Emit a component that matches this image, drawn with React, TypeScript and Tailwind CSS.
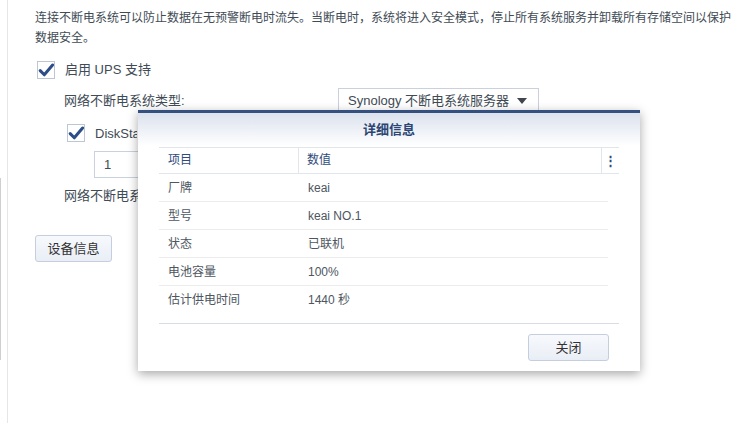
const rows = [
  { k: '厂牌', v: 'keai' },
  { k: '型号', v: 'keai NO.1' },
  { k: '状态', v: '已联机' },
  { k: '电池容量', v: '100%' },
  { k: '估计供电时间', v: '1440 秒' },
]

function CheckBox() {
  return (
    <span className="flex h-[18px] w-[18px] shrink-0 items-center justify-center border border-[#bcc6d4] bg-white">
      <svg width="16" height="16" viewBox="0 0 16 16" fill="none">
        <path d="M2.2 8.6 L6.3 12.8 L14.6 3" stroke="#2d4d88" strokeWidth="3" strokeLinecap="round" strokeLinejoin="round" />
      </svg>
    </span>
  )
}

export default function App() {
  return (
    <div className="relative h-[423px] w-[741px] overflow-hidden bg-white text-[12px] text-[#414b55] font-['Liberation_Sans','Noto_Sans_CJK_SC',sans-serif]">
      {/* sidebar edge */}
      <div className="absolute left-0 top-[178px] h-[182px] w-px bg-[#cfcfcf]" />

      <div className="ml-[7px] h-full border-l border-[#e6e6e6] pl-[27px] pt-[8px]">
        <p className="w-[700px] leading-[20px]">
          连接不断电系统可以防止数据在无预警断电时流失。当断电时，系统将进入安全模式，停止所有系统服务并卸载所有存储空间以保护数据安全。
        </p>

        <div className="ml-[2px] mt-[12px] flex items-center gap-[10px]">
          <CheckBox />
          <span className="text-[13px]">启用 UPS 支持</span>
        </div>

        <div className="ml-[29px] mt-[8px] flex h-[27px] items-center">
          <span className="w-[274px] text-[13px]">网络不断电系统类型:</span>
          <div className="flex h-[27px] w-[201px] items-center justify-between border border-[#c9d1dc] pl-[9px] pr-[11px] text-[13px]">
            <span>Synology 不断电系统服务器</span>
            <span className="h-0 w-0 border-x-[5px] border-t-[6px] border-x-transparent border-t-[#3f4650]" />
          </div>
        </div>

        <div className="ml-[32px] mt-[9px] flex items-center gap-[10px]">
          <CheckBox />
          <span className="w-[42px] overflow-hidden whitespace-nowrap text-[13px]">DiskStation</span>
        </div>

        <div className="ml-[59px] mt-[8px] flex h-[27px] w-[44px] items-center border border-r-0 border-[#c9d1dc] pl-[9px] text-[13px]">
          1
        </div>

        <div className="ml-[29px] mt-[9px] w-[74px] overflow-hidden whitespace-nowrap text-[13px] leading-[18px]">
          网络不断电系统服务器 IP 地址
        </div>

        <button className="mt-[30px] h-[27px] w-[77px] rounded-[3px] border border-[#c5cede] bg-gradient-to-b from-[#f7f9fc] to-[#e9eef6] text-[13px] text-[#333]">
          设备信息
        </button>
      </div>

      {/* dialog */}
      <div className="absolute left-[138px] top-[110px] flex h-[261px] w-[502px] flex-col border-t-[3px] border-[#34507f] bg-white shadow-[0_3px_10px_rgba(0,0,0,0.35)]">
        <div className="flex h-[33px] items-center justify-center bg-gradient-to-b from-[#dbe2ed] to-white text-[13px] font-bold text-[#2b4675]">
          详细信息
        </div>

        <div className="mx-[21px] mt-[1px] flex h-[177px] flex-col border-b border-[#d9dde3]">
          <div className="flex h-[27px] items-center border-y border-[#e1e5ec] text-[#2f4b7c]">
            <span className="w-[140px] border-r border-[#e1e5ec] pl-[9px] leading-[25px]">项目</span>
            <span className="flex-1 border-r border-[#e1e5ec] pl-[8px] leading-[25px]">数值</span>
            <span className="flex w-[17px] justify-center text-[13px] font-bold leading-[25px]">⋮</span>
          </div>
          {rows.map((r, i) => (
            <div
              key={r.k}
              className={`mr-[11px] flex h-[28px] items-center text-[#4d5661] ${i < rows.length - 1 ? 'border-b border-[#ececec]' : ''}`}
            >
              <span className="w-[140px] pl-[9px]">{r.k}</span>
              <span className="pl-[9px]">{r.v}</span>
            </div>
          ))}
        </div>

        <div className="mr-[31px] mt-[10px] flex justify-end">
          <button className="h-[27px] w-[81px] rounded-[3px] border border-[#c5cede] bg-gradient-to-b from-[#f7f9fc] to-[#e9eef6] text-[13px] text-[#333]">
            关闭
          </button>
        </div>
      </div>
    </div>
  )
}
